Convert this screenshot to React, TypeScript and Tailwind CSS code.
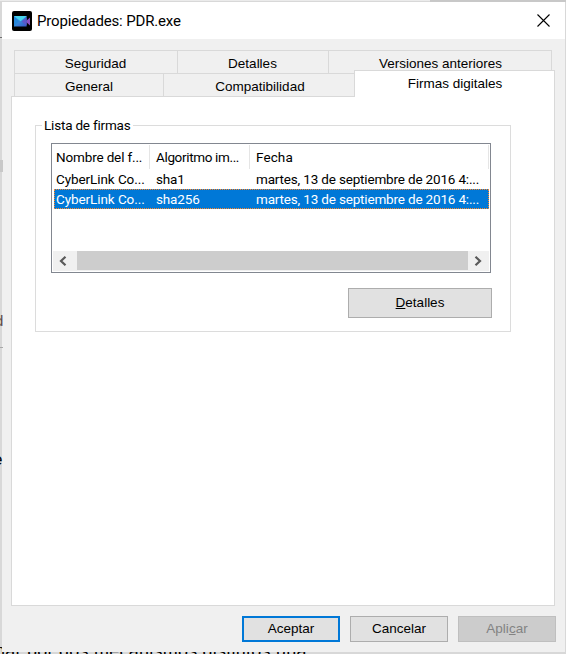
import React from 'react';

function AppIcon() {
  return (
    <svg width="20" height="20" viewBox="0 0 20 20" className="shrink-0">
      <defs>
        <linearGradient id="body" x1="0" y1="0" x2="1" y2="1">
          <stop offset="0" stopColor="#35b8f2" />
          <stop offset="1" stopColor="#3b55c4" />
        </linearGradient>
      </defs>
      <rect width="20" height="20" rx="2" fill="#000" />
      <path d="M13.5 10.5l4.5-4v8z" fill="#8a4fc0" />
      <rect x="2" y="5" width="12.6" height="10.5" fill="url(#body)" />
      <path d="M2 5h12.6l-6 5.2z" fill="#48d5ee" />
      <path d="M2 5l5 5.3-5 5.2z" fill="#2587dc" />
      <path d="M14.6 6.5v8l-5-4z" fill="#5c58c8" />
    </svg>
  );
}

function Arrow({ right = false }: { right?: boolean }) {
  return (
    <svg width="8" height="10" viewBox="0 0 8 10" className={right ? 'rotate-180' : ''}>
      <path d="M6.5 .8L2 5l4.5 4.2" fill="none" stroke="#5a5a5a" strokeWidth="2.2" />
    </svg>
  );
}

const rows = [
  { algo: 'sha1', selected: false },
  { algo: 'sha256', selected: true },
];

function Signatures() {
  return (
    <div className="mt-[11px] ml-[15px] flex h-[130px] w-[440px] flex-col border border-[#828790] bg-white p-px font-[Roboto,'Liberation_Sans',sans-serif] text-[13.5px] tracking-[-0.15px] whitespace-nowrap">
      <div className="flex h-[24px] leading-[24px] tracking-[-0.15px]">
        <div className="w-[97px] shrink-0 border-r border-[#e5e5e5] pl-[3px]">Nombre del f...</div>
        <div className="w-[100px] shrink-0 border-r border-[#e5e5e5] pl-[6px] tracking-[-0.35px]">Algoritmo im...</div>
        <div className="w-[239px] shrink-0 border-r border-[#e5e5e5] pl-[6px] tracking-[0.1px]">Fecha</div>
      </div>
      {rows.map((r) => (
        <div
          key={r.algo}
          className={
            r.selected
              ? 'ml-px flex h-[20px] w-[435px] border border-dotted border-[#ff8728] bg-[#0078d7] leading-[19px] text-white'
              : 'ml-px flex h-[20px] w-[435px] border border-transparent leading-[18px]'
          }
        >
          <div className="w-[96px] shrink-0 pl-px tracking-[-0.08px]">CyberLink Co...</div>
          <div className="w-[100px] shrink-0 pl-[5px]">{r.algo}</div>
          <div className="pl-[5px] tracking-[-0.17px]">martes, 13 de septiembre de 2016 4:...</div>
        </div>
      ))}
      <div className="mt-auto flex h-[20px] bg-[#f0f0f0]">
        <div className="flex w-[24px] items-center justify-center pr-[5px]"><Arrow /></div>
        <div className="h-[19px] w-[391px] bg-[#cdcdcd]" />
        <div className="flex flex-1 items-center justify-center pr-px"><Arrow right /></div>
      </div>
    </div>
  );
}

export default function App() {
  return (
    <div className="relative h-[654px] w-[566px] overflow-hidden bg-[#d8d8d8] font-['Liberation_Sans',Arial,sans-serif] text-[13.5px] text-black">
      <div className="absolute top-0 left-0 h-px w-[430px] bg-[#ebebeb]" />
      <div className="absolute top-0 left-[430px] h-[2px] w-[136px] bg-[#c8c8c8]" />
      <div className="absolute top-[37px] left-0 h-px w-[2px] bg-[#707070]" />
      <div className="absolute top-[641px] left-[-5px] text-[18px] leading-[20px] tracking-[0.24px] whitespace-nowrap">nar por dos mecanismos distintos una</div>
      <div className="absolute top-[2px] left-[2px] flex h-[650px] w-[563px] flex-col bg-[#f0f0f0]">
        <header className="flex h-[37px] shrink-0 items-center bg-white pl-[10px]">
          <AppIcon />
          <h1 className="ml-[5px] font-[Roboto,'Noto_Sans',sans-serif] text-[15px] leading-[22px] tracking-[-0.15px]">Propiedades: PDR.exe</h1>
          <svg width="13" height="13" viewBox="0 0 13 13" className="mr-[15px] ml-auto">
            <path d="M.5.5l12 12M12.5.5l-12 12" fill="none" stroke="#000" strokeWidth="1.1" />
          </svg>
        </header>
        <nav className="relative mt-[11px] ml-[12px] w-[538px] shrink-0">
          <div className="flex h-[23px] border-t border-l border-[#d9d9d9] text-center leading-[25px]">
            <div className="w-[163px] border-r border-[#d9d9d9] pr-px">Seguridad</div>
            <div className="w-[151px] border-r border-[#d9d9d9] pr-px">Detalles</div>
            <div className="w-[223px] border-r border-[#d9d9d9] pl-px">Versiones anteriores</div>
          </div>
          <div className="flex h-[23px] w-[340px] border-t border-l border-[#d9d9d9] text-center leading-[25px]">
            <div className="w-[149px] border-r border-[#d9d9d9]">General</div>
            <div className="flex-1 pl-[2px]">Compatibilidad</div>
          </div>
          <div className="absolute top-[20px] left-[340px] z-10 h-[27px] w-[201px] border border-b-0 border-[#d9d9d9] bg-white pl-px text-center leading-[25px]">Firmas digitales</div>
        </nav>
        <main className="ml-[9px] h-[510px] w-[544px] shrink-0 border border-[#d9d9d9] bg-white">
          <section className="mt-[28px] ml-[23px] h-[207px] w-[476px] border border-[#dcdcdc]">
            <h2 className="mt-[-9px] ml-[6px] h-[17px] w-[91px] bg-white pl-[2px] font-[Roboto,'Liberation_Sans',sans-serif] text-[13.5px] leading-[16px] tracking-[-0.2px] whitespace-nowrap">Lista de firmas</h2>
            <div className="mt-[-2px]"><Signatures /></div>
            <button className="mt-[15px] ml-[312px] block h-[30px] w-[144px] border border-[#adadad] bg-[#e1e1e1]"><u>D</u>etalles</button>
          </section>
        </main>
        <footer className="mt-[10px] mr-[9px] flex justify-end gap-[10px]">
          <button className="h-[26px] w-[98px] border-2 border-[#0078d7] bg-[#e1e1e1]">Aceptar</button>
          <button className="h-[26px] w-[98px] border border-[#adadad] bg-[#e1e1e1]">Cancelar</button>
          <button className="h-[26px] w-[98px] border border-[#bfbfbf] bg-[#cccccc] text-[#838383]">Apli<u>c</u>ar</button>
        </footer>
      </div>
      <div className="absolute top-[312px] left-[-5px] h-[18px] w-[8px] overflow-hidden text-[15px] leading-[18px] text-[#604b48]">d</div>
      <div className="absolute top-[450px] left-[-7px] h-[20px] w-[10px] overflow-hidden text-[17px] leading-[20px]">e</div>
      <div className="absolute top-[160px] left-0 h-[12px] w-[3px] bg-[#c8c8c8]" />
      <div className="absolute top-[347px] left-0 h-px w-[3px] bg-[#a8a8a8]" />
    </div>
  );
}
